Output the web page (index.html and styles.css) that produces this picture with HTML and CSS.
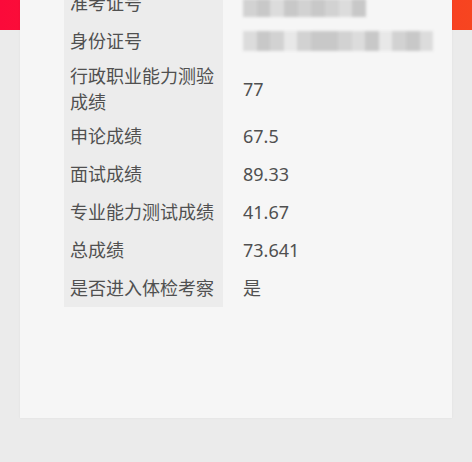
FILE: index.html
```html
<!DOCTYPE html>
<html lang="zh-CN">
<head>
<meta charset="utf-8">
<title>成绩查询</title>
<link rel="stylesheet" href="styles.css">
</head>
<body>
<div class="page">
  <div class="card">
    <div class="table">
      <div class="label">准考证号</div>
      <div class="value"><div class="mosaic m1"><i class="g2"></i><i class="g3"></i><i class="g1"></i><i class="g3"></i><i class="g2"></i><i class="g3"></i><i class="g2"></i><i class="g1"></i><i class="g3"></i></div></div>
      <div class="label">身份证号</div>
      <div class="value"><div class="mosaic m2"><i class="g1"></i><i class="g3"></i><i class="g2"></i><i class="g0"></i><i class="g2"></i><i class="g3"></i><i class="g3"></i><i class="g2"></i><i class="g1"></i><i class="g3"></i><i class="g0"></i><i class="g2"></i><i class="g3"></i><i class="g1"></i></div></div>
      <div class="label">行政职业能力测验<br>成绩</div>
      <div class="value">77</div>
      <div class="label">申论成绩</div>
      <div class="value">67.5</div>
      <div class="label">面试成绩</div>
      <div class="value">89.33</div>
      <div class="label">专业能力测试成绩</div>
      <div class="value">41.67</div>
      <div class="label">总成绩</div>
      <div class="value">73.641</div>
      <div class="label">是否进入体检考察</div>
      <div class="value">是</div>
    </div>
  </div>
</div>
</body>
</html>
```
FILE: styles.css
```css
html, body {
  margin: 0;
  padding: 0;
}
body {
  background: #ebebeb;
  font-family: "Noto Sans", "Noto Sans CJK SC", sans-serif;
  color: #505050;
}
.page {
  width: 472px;
  height: 462px;
  overflow: hidden;
  background: linear-gradient(to right, #fb0a3a, #f74520) no-repeat top left / 100% 30px, #ebebeb;
}
.card {
  display: flow-root;
  margin: 0 20px;
  height: 418px;
  background: #f6f6f6;
  box-shadow: 0 0 2px rgba(0, 0, 0, 0.06);
}
.table {
  display: grid;
  grid-template-columns: 159px 1fr;
  margin: -16px 0 0 44px;
  font-size: 18px;
  line-height: 26px;
}
.label {
  background: #ececec;
  padding: 2.5px 6px;
  min-height: 38px;
  box-sizing: border-box;
  display: flex;
  align-items: center;
}
.value {
  padding: 2.5px 0 2.5px 20px;
  min-height: 38px;
  box-sizing: border-box;
  display: flex;
  align-items: center;
}
.mosaic {
  display: flex;
  filter: blur(1.6px);
}
.mosaic i {
  display: block;
  height: 18px;
  flex: 1;
}
.m1 {
  width: 123px;
  margin-top: 10px;
}
.m2 {
  width: 190px;
}
.m2 i {
  height: 20px;
}
.g0 { background: #e8e8e8; }
.g1 { background: #dcdcdc; }
.g2 { background: #d2d2d2; }
.g3 { background: #c8c8c8; }
```
